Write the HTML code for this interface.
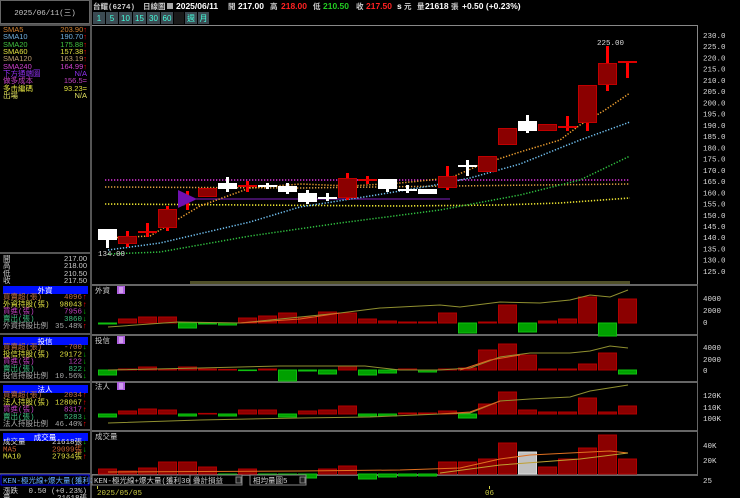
<!DOCTYPE html>
<html><head><meta charset="utf-8">
<style>
html,body{margin:0;padding:0;background:#000;width:740px;height:498px;overflow:hidden}
svg{display:block}
text{font-family:"Liberation Sans","Noto Sans CJK TC",sans-serif}
.s{font-family:"Liberation Mono","Noto Sans CJK TC",monospace;font-size:7.5px}
</style></head><body>
<svg id="sv" width="740" height="498" viewBox="0 0 740 498" xmlns="http://www.w3.org/2000/svg">
<rect width="740" height="498" fill="#000"/>
<!-- left panel frame -->
<rect x="0.5" y="0.5" width="89" height="23" fill="#000" stroke="#666"/>
<text x="45" y="15" class="s" fill="#ccc" text-anchor="middle">2025/06/11(三)</text>
<rect x="90" y="0" width="2" height="498" fill="#555"/>
<rect x="0" y="24" width="90" height="2" fill="#555"/>
<g class="s">
<text x="3" y="32" fill="#d08030">SMA5</text><text x="87" y="32" fill="#d08030" text-anchor="end">203.90<tspan fill="#f00">↑</tspan></text>
<text x="3" y="39" fill="#70b0e0">SMA10</text><text x="87" y="39" fill="#70b0e0" text-anchor="end">190.70<tspan fill="#f00">↑</tspan></text>
<text x="3" y="47" fill="#40c040">SMA20</text><text x="87" y="47" fill="#40c040" text-anchor="end">175.88<tspan fill="#f00">↑</tspan></text>
<text x="3" y="54" fill="#e0e040">SMA60</text><text x="87" y="54" fill="#e0e040" text-anchor="end">157.38<tspan fill="#f00">↑</tspan></text>
<text x="3" y="61" fill="#c0a070">SMA120</text><text x="87" y="61" fill="#c0a070" text-anchor="end">163.19<tspan fill="#f00">↑</tspan></text>
<text x="3" y="69" fill="#d040d0">SMA240</text><text x="87" y="69" fill="#d040d0" text-anchor="end">164.99<tspan fill="#f00">↑</tspan></text>
<text x="3" y="76" fill="#9030f0">下方通端圖</text><text x="87" y="76" fill="#9030f0" text-anchor="end">N/A</text>
<text x="3" y="83" fill="#c040c0">做多成本</text><text x="87" y="83" fill="#c040c0" text-anchor="end">156.5=</text>
<text x="3" y="91" fill="#e0e040">多击編碼</text><text x="87" y="91" fill="#e0e040" text-anchor="end">93.23=</text>
<text x="3" y="98" fill="#e0e060">出場</text><text x="87" y="98" fill="#e0e060" text-anchor="end">N/A</text>
</g>
<rect x="0" y="252" width="90" height="2" fill="#555"/>
<g class="s" fill="#ccc">
<text x="3" y="261">開</text><text x="87" y="261" text-anchor="end">217.00</text>
<text x="3" y="268">高</text><text x="87" y="268" text-anchor="end">218.00</text>
<text x="3" y="276">低</text><text x="87" y="276" text-anchor="end">210.50</text>
<text x="3" y="283">收</text><text x="87" y="283" text-anchor="end">217.50</text>
</g>
<g id="left"></g>
<!-- top bar -->
<g font-size="8.5" font-weight="bold">
<text x="93" y="9" class="s" fill="#ccc">台耀(6274)</text>
<text x="143" y="9" class="s" fill="#ccc">日線圖</text>
<rect x="167" y="3" width="6" height="6" fill="#aaa"/>
<text x="176" y="9" fill="#fff">2025/06/11</text>
<text x="228" y="9" class="s" fill="#ccc">開</text><text x="238" y="9" fill="#fff">217.00</text>
<text x="270" y="9" class="s" fill="#ccc">高</text><text x="281" y="9" fill="#f22">218.00</text>
<text x="313" y="9" class="s" fill="#ccc">低</text><text x="323" y="9" fill="#2c2">210.50</text>
<text x="356" y="9" class="s" fill="#ccc">收</text><text x="366" y="9" fill="#f22">217.50</text>
<text x="397" y="9" fill="#fff">s</text><text x="404" y="9" class="s" fill="#ccc">元</text>
<text x="417" y="9" class="s" fill="#ccc">量</text><text x="425" y="9" fill="#fff">21618</text>
<text x="451" y="9" class="s" fill="#ccc">張</text>
<text x="462" y="9" fill="#fff">+0.50 (+0.23%)</text>
</g>
<g id="btns"></g>
<!-- chart frame -->
<path d="M92 25.5H697.5V284" stroke="#888" fill="none"/>
<g id="chart"></g>
</svg>
<script>
var S='';
function r(x,y,w,h,f,st){return '<rect x="'+x+'" y="'+y+'" width="'+w+'" height="'+h+'" fill="'+f+'"'+(st?' stroke="'+st+'" stroke-width="1"':'')+'/>';}
function t(x,y,s,f,a,c){return '<text x="'+x+'" y="'+y+'" fill="'+f+'"'+(a?' text-anchor="'+a+'"':'')+' class="'+(c||'s')+'">'+s+'</text>';}
// buttons
var B=[['1',93,12],['5',106,12],['10',119,13],['15',133,13],['30',147,13],['60',161,12],['',174,10],['週',185,12],['月',198,11]];
var bs='';B.forEach(function(b){bs+=r(b[1],12,b[2],12,b[0]?'#3c4a52':'#1a1a1a');if(b[0])bs+='<text x="'+(b[1]+b[2]/2)+'" y="21" fill="#4fd" font-size="8" text-anchor="middle" font-family="Liberation Sans,Noto Sans CJK TC,sans-serif">'+b[0]+'</text>';});
document.getElementById('btns').innerHTML=bs;
// left panels
var L='';
function hdr(y,s){L+=r(3,y,85,8,'#0010ff')+t(45,y+7,s,'#fff','middle');}
hdr(286,'外資');
var rows1=[['買賣超(張)','4096','#c07040','#f00','↑'],['外資持股(張)','98043','#e0e040','#f00','↑'],['買進(張)','7956','#c040c0','#0c0','↓'],['賣出(張)','3860','#40c080','#0c0','↓'],['外資持股比例','35.48%','#aaa','#f00','↑']];
function rows(y0,arr){arr.forEach(function(a,i){var y=y0+i*7.3;L+=t(3,y,a[0],a[2])+t(82,y,a[1],a[2],'end')+t(87,y,a[4],a[3],'end');});}
rows(299,rows1);
L+=r(0,333,90,2,'#555');hdr(337,'投信');
rows(349,[['買賣超(張)','-700','#c07040','#0c0','↓'],['投信持股(張)','29172','#e0e040','#0c0','↓'],['買進(張)','122','#c040c0','#0c0','↓'],['賣出(張)','822','#40c080','#0c0','↓'],['投信持股比例','10.56%','#aaa','#0c0','↓']]);
L+=r(0,381,90,2,'#555');hdr(385,'法人');
rows(397,[['買賣超(張)','2034','#c07040','#f00','↑'],['法人持股(張)','128067','#e0e040','#f00','↑'],['買進(張)','8317','#c040c0','#f00','↑'],['賣出(張)','5283','#40c080','#0c0','↓'],['法人持股比例','46.40%','#aaa','#f00','↑']]);
L+=r(0,429,90,2,'#555');hdr(433,'成交量');
rows(444,[['成交量','21618張','#ddd','#0c0','↓'],['MA5','29099張','#d06030','#0c0','↓'],['MA10','27934張','#e0e040','#f00','↑']]);
L+=r(0,473,90,2,'#555');
L+=r(1,475,88,10,'#000','#00f')+t(3,483,'KEN-極光線+爆大量(獲利30P)','#6af');
L+=t(3,493,'漲跌','#ccc')+t(87,493,'0.50 (+0.23%)','#ccc','end')+t(3,500,'量','#ccc')+t(87,500,'21618張','#ccc','end');
document.getElementById('left').innerHTML=L;

// chart
var C='';
function Y(p){return 35+(230-p)*2.247;}
for(var p=230;p>=125;p-=5){C+=t(703,Y(p)+3,p.toFixed(1),'#ddd','','s');}
// separators
[284,334,381,430,474].forEach(function(y){C+=r(92,y,606,2,'#666');});
C+=r(697,284,1,191,'#666');
// bottom volume band
C+=r(190,281,440,3,'#505028');
// MA lines
function pl(pts,col,dash,w){return '<polyline points="'+pts+'" fill="none" stroke="'+col+'" stroke-width="'+(w||1.3)+'"'+(dash?' stroke-dasharray="1.3 1.7"':'')+'/>';}
C+=pl('105,180 630,180','#e030e0',1,1.6);
C+=pl('105,187 300,188 450,186 630,184','#e0a040',1,1.5);
C+=pl('195,199 450,199','#8020c0',0,1);
C+=pl('105,204 250,205 400,206 500,205 560,203 630,198','#e8e030',1,1.6);
C+=pl('108,254 160,252 250,236 340,223 440,210 520,195 580,180 630,156','#30c040',1,1.5);
C+=pl('108,250 160,243 250,222 300,207 370,196 430,186 470,178 520,164 580,140 630,122','#70c0f0',1,1.5);
C+=pl('108,238 150,236 200,206 250,188 300,184 350,186 400,183 450,178 480,165 520,152 560,140 580,125 605,110 630,93','#f0a030',1,1.5);
// candles
var D=[[229,240,229,248,'w'],[236,244,231,247,'r'],[231,233,223,237,'r'],[209,228,206,231,'r'],[190,208,191,210,'p'],[188,197,188,197,'r'],[183,189,177,192,'w'],[185,187,181,192,'r'],[185,187,183,189,'w'],[186,192,183,194,'w'],[193,202,190,204,'w'],[197,199,193,201,'w'],[178,198,173,200,'r'],[179,181,176,184,'r'],[179,189,179,192,'w'],[189,191,185,193,'w'],[189,194,189,194,'w'],[176,188,166,190,'r'],[165,167,160,176,'w'],[156,172,156,172,'r'],[128,145,128,145,'r'],[121,131,115,133,'w'],[124,131,124,131,'r'],[126,128,116,131,'r'],[85,123,85,131,'r'],[63,85,46,91,'r'],[61,63,61,78,'r']];
D.forEach(function(d,i){var x=98+20*i,cx=x+9;
 if(d[4]=='w'){C+=r(cx-1,d[2],3,d[3]-d[2],'#fff')+r(x,d[0],19,Math.max(2,d[1]-d[0]),'#fff');}
 else if(d[4]=='p'){C+=r(cx-1,d[2],3,d[3]-d[2],'#f00')+'<polygon points="'+x+','+d[0]+' '+(x+19)+','+((d[0]+d[1])/2)+' '+x+','+d[1]+'" fill="#7010b0"/>';}
 else{C+=r(cx-1,d[2],3,d[3]-d[2],'#f00');var h=d[1]-d[0];C+= h>3? r(x+0.5,d[0]+0.5,18,h-1,'#8b0000','#c00000'): r(x,d[0],19,2,'#d00');}
});
C+=t(98,256,'134.00','#ddd');C+=t(597,45,'225.00','#ddd');
// panel labels
[['外資',293],['投信',343],['法人',389]].forEach(function(a){C+=t(95,a[1],a[0],'#ccc')+r(117,a[1]-7,8,8,'#b060e0')+'<path d="M119 '+(a[1]-5)+'h4M119 '+(a[1]-3)+'h4M119 '+(a[1]-1)+'h4" stroke="#fff" stroke-width="0.8"/>';});
C+=t(95,439,'成交量','#ccc');
// bars
function bars(base,vals,grayIdx){vals.forEach(function(v,i){var x=98+20*i;if(Math.abs(v)<0.1)return;
 if(grayIdx===i){C+=r(x+0.5,base-v,18,v,'#c0c0c0','#ddd');return;}
 if(v>0){C+=r(x+0.5,base-v,18,v,'#8b0000','#b00000');}else{C+=r(x+0.5,base,18,-v,'#00a000','#10c010');}});}
bars(323,[-1,4,6,6,-5,-1,-2,5,7,10,6,11,10,4,2,1,1,10,-10,1,18,-9,2,4,26,-13,24]);
bars(370,[-5,1,3,0.6,3,1,0.6,-0.6,1,-11,-1,-4,4,-5,-3,1,-2,1,2,20,26,15,1,1,6,17,-4]);
bars(414,[-3,3,5,4,-2,0.6,-2,4,4,-3,3,4,8,-2,-2,1,1,3,-4,10,22,4,2,2,16,2,8]);
bars(474,[5,3,6,12,12,7,-7,5,-4,-5,-4,5,8,-5,-3,-2,-2,12,12,15,31,22,7,15,26,39,15],21);
// panel lines
C+=pl('108,327 178,322 240,323 340,313 380,308 440,305 460,307 500,302 540,303 570,300 590,295 610,297 628,290','#909030',0,1);
C+=pl('240,323 300,319 340,313','#e06020',0,1);
C+=pl('108,370 200,368 280,366 365,366 400,370 440,370 470,368 500,357 530,353 570,353 590,351 610,346 628,348','#909030',0,1);
C+=pl('460,370 490,360 520,355','#e06020',0,1);
C+=pl('108,423 200,420 300,418 370,417 440,414 470,413 500,401 530,399 570,397 590,391 628,385','#909030',0,1);
C+=pl('440,414 470,412 500,401','#e06020',0,1);
C+=pl('108,472 300,471 400,470 460,468 500,459 530,455 590,452 610,451 628,453','#e07020',0,1);
C+=pl('440,473 500,465 540,462 580,459 628,453','#c0a030',0,1);
// right axis panel labels
[['4000',301],['2000',313],['0',325],['4000',350],['2000',362],['0',373],['120K',398],['110K',410],['100K',421],['40K',448],['20K',463],['25',483]].forEach(function(a){C+=t(703,a[1],a[0],'#ddd');});
// bottom bar
C+=r(92,475,98,10,'#000','#888')+t(94,483,'KEN-極光線+爆大量(獲利30P)','#ccc');
C+=r(190,475,52,10,'#000','#888')+t(193,483,'疊計損益','#ccc')+r(236,477,5,6,'#222','#888');
C+=r(250,475,56,10,'#000','#888')+t(253,483,'相均量圖5','#ccc')+r(300,477,5,6,'#222','#888');
C+=r(97,486,1,3,'#cc4')+t(97,495,'2025/05/05','#cc4');
C+=r(489,486,1,3,'#cc4')+t(485,495,'06','#cc4');
document.getElementById('chart').innerHTML=C;
</script>
</body></html>
